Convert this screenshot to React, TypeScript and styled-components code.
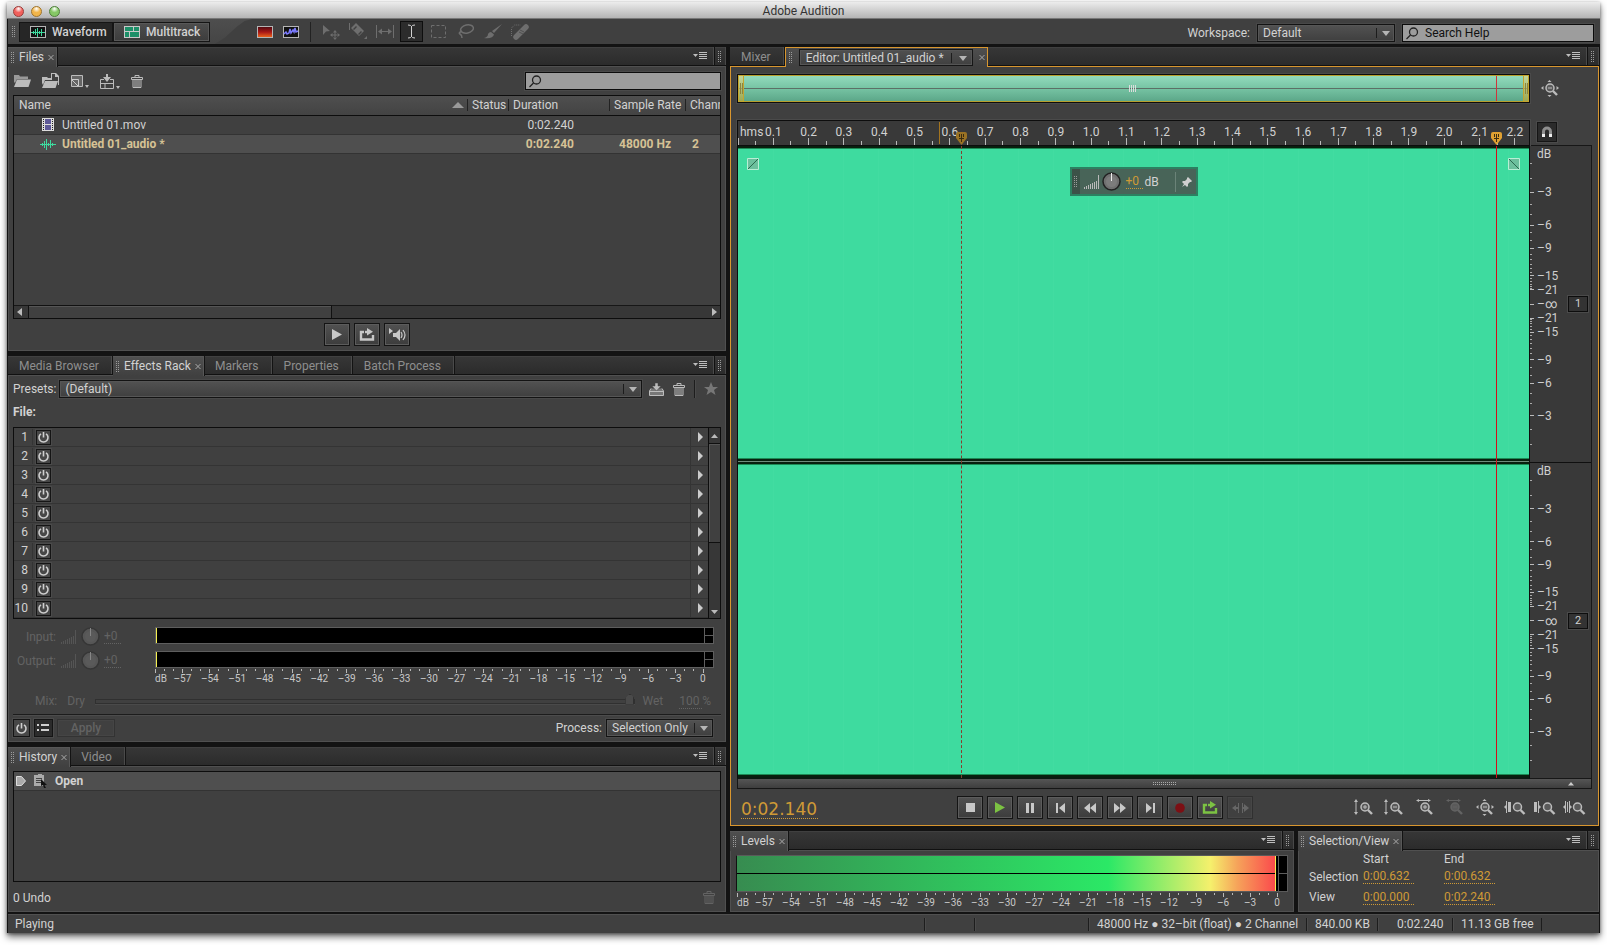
import React from 'react';
import styled, { createGlobalStyle, css } from 'styled-components';

const sans = '"Roboto", "Open Sans", "Liberation Sans", sans-serif';
const ink = '#d2d2d2';
const dim = '#8e8e8e';
const off = '#636363';
const gold = '#cf9a36';
const surface = '#404040';
const gutter = '#131313';
const edge = '#505050';
const focus = '#d8962f';
const wave = '#3edb9f';

const GlobalStyle = createGlobalStyle`
  * { box-sizing: border-box; }
  body { margin: 0; background: #fff; color: ${ink}; font: 12px/16px ${sans}; }
  button, input, select { font: inherit; color: inherit; margin: 0; padding: 0; border: 0; border-radius: 0; background: none; outline: none; }
  button, select { cursor: default; }
  svg { display: block; flex: none; }
`;

const Page = styled.div`
  min-height: 100vh;
  padding: 2px 7px 12px;
  display: flex;
  flex-direction: column;
`;
const Window = styled.div`
  flex: 1;
  display: flex;
  flex-direction: column;
  background: ${gutter};
  box-shadow: 0 4px 7px rgba(0, 0, 0, 0.55), 0 1px 3px rgba(0, 0, 0, 0.4);
`;
const TitleBar = styled.header`
  height: 17px;
  display: grid;
  grid-template-columns: 1fr auto 1fr;
  align-items: center;
  padding: 2px 6px 0;
  background: linear-gradient(#ececec, #b4b4b4);
  border-bottom: 1px solid #777;
  color: #333;
`;
const Title = styled.h1`
  margin: 0;
  font-size: 12px;
  line-height: 14px;
  font-weight: 400;
`;
const Lights = styled.div`
  display: flex;
  gap: 7px;
`;
const Light = styled.button<{ $c: string; $d: string }>`
  width: 11px;
  height: 11px;
  border-radius: 50%;
  border: 1px solid ${(p) => p.$d};
  background: radial-gradient(circle at 50% 20%, #fff 0, ${(p) => p.$c} 45%, ${(p) => p.$c} 100%);
`;

const AppBar = styled.div`
  height: 25px;
  margin: 0 0 3px 1px;
  display: flex;
  align-items: center;
  background: ${surface};
`;
const Modes = styled.div`
  display: flex;
  align-items: center;
  height: 25px;
  padding: 0 47px 0 4px;
  background: linear-gradient(#4e4e4e, #454545);
  clip-path: polygon(0 0, 98% 0, 95% 8%, 92% 30%, 87% 75%, 83% 100%, 0 100%);
`;
const ModeGroup = styled.div`
  display: flex;
  margin-left: 3px;
`;
const ModeButton = styled.button<{ $on?: boolean; $w: number }>`
  display: flex;
  align-items: center;
  gap: 6px;
  width: ${(p) => p.$w}px;
  height: 20px;
  padding-left: 10px;
  font-weight: 500;
  border: 1px solid #151515;
  background: ${(p) => (p.$on ? '#262626' : 'linear-gradient(#4e4e4e, #3c3c3c)')};
  ${(p) => !p.$on && 'box-shadow: inset 0 0 0 1px #585858;'}
`;
const ViewTools = styled.div`
  display: flex;
  gap: 10px;
  padding-right: 11px;
  margin-right: 8px;
  border-right: 1px solid #222;
  height: 20px;
  align-items: center;
`;
const Tools = styled.div`
  display: flex;
  gap: 4px;
  flex: 1;
`;
const Tool = styled.button<{ $on?: boolean }>`
  width: 23px;
  height: 21px;
  display: grid;
  place-items: center;
  border: 1px solid ${(p) => (p.$on ? '#0e0e0e' : 'transparent')};
  background: ${(p) => (p.$on ? '#2c2c2c' : 'none')};
  color: ${(p) => (p.$on ? ink : '#6e6e6e')};
`;
const Finder = styled.div`
  display: flex;
  align-items: center;
  gap: 7px;
  padding: 3px 6px 0 0;
`;
const Label = styled.label`
  white-space: nowrap;
`;

const SelectBox = styled.span<{ $w?: number; $grow?: boolean }>`
  position: relative;
  display: flex;
  height: 18px;
  ${(p) => (p.$grow ? 'flex: 1;' : `width: ${p.$w}px;`)}
  box-shadow: 0 0 0 1px #484848;
  svg { position: absolute; right: 5px; top: 4px; pointer-events: none; }
`;
const Select = styled.select`
  appearance: none;
  width: 100%;
  padding: 0 20px 0 5px;
  border: 1px solid #131313;
  background: linear-gradient(#525252, #3f3f3f);
  box-shadow: inset 0 0 0 1px #565656;
`;
const SearchBox = styled.div<{ $w: number }>`
  display: flex;
  align-items: center;
  width: ${(p) => p.$w}px;
  height: 18px;
  border: 1px solid #0c0c0c;
  background: #9d9d9d;
  color: #111;
  padding-left: 2px;
  box-shadow: 0 0 0 1px #4a4a4a;
  input { flex: 1; min-width: 0; padding-left: 5px; }
  input::placeholder { color: #111; opacity: 1; }
`;

const Workspace = styled.main`
  flex: 1;
  display: grid;
  grid-template-columns: minmax(0, 718fr) minmax(0, 869fr);
  gap: 4px;
  padding: 0 1px;
`;
const Column = styled.div`
  display: flex;
  flex-direction: column;
  gap: 5px;
  min-width: 0;
`;
const BottomRow = styled.div`
  display: grid;
  grid-template-columns: minmax(0, 564fr) minmax(0, 301fr);
  gap: 4px;
`;
const Panel = styled.section<{ $grow?: boolean }>`
  display: flex;
  flex-direction: column;
  min-width: 0;
  ${(p) => p.$grow && 'flex: 1;'}
`;
const PanelBody = styled.div<{ $focus?: boolean }>`
  flex: 1;
  display: flex;
  flex-direction: column;
  background: ${surface};
  border: 1px solid ${(p) => (p.$focus ? focus : edge)};
  border-top: 0;
`;
const Bar = styled.div<{ $focus?: boolean }>`
  display: flex;
  height: 20px;
  background: linear-gradient(#373737, #2a2a2a);
  box-shadow: inset 0 -1px ${(p) => (p.$focus ? focus : edge)}, inset 0 -2px #111, inset 0 1px #404040;
`;
const TabBox = styled.div<{ $on?: boolean; $focus?: boolean }>`
  display: flex;
  align-items: center;
  white-space: nowrap;
  button { white-space: nowrap; }
  ${(p) =>
    p.$on
      ? css`
          padding: 0 2px 1px 3px;
          background: linear-gradient(#4f4f4f, ${surface});
          border: solid ${p.$focus ? focus : '#575757'};
          border-width: 1px 1px 0 ${p.$focus ? '1px' : '0'};
          gap: ${p.$focus ? 6 : 4}px;
          box-shadow: ${p.$focus ? 'none' : '1px 0 #131313'};
        `
      : css`
          height: 18px;
          padding: 2px 12px 0 11px;
          color: ${dim};
          border-right: 1px solid #4a4a4a;
          box-shadow: 1px 0 #131313;
          margin-right: 1px;
        `}
`;
const EditorPick = styled.span`
  display: flex;
  align-items: center;
  gap: 7px;
  height: 17px;
  margin: 1px 0 0;
  padding: 0 5px 0 6px;
  border: 1px solid #161616;
  background: linear-gradient(#505050, ${surface});
  box-shadow: inset 0 0 0 1px #555;
`;
const PickSplit = styled.span`
  width: 1px;
  height: 10px;
  background: #1d1d1d;
`;
const BarEnd = styled.div`
  margin-left: auto;
  display: flex;
  height: 18px;
`;
const MenuButton = styled.button`
  width: 21px;
  border-right: 1px solid #4a4a4a;
`;
const GripCell = styled.span`
  width: 12px;
  border-left: 1px solid #111;
  border-right: 1px solid #484848;
  display: grid;
  place-items: center;
`;
const IconButton = styled.button<{ $off?: boolean }>`
  display: grid;
  place-items: center;
  color: ${(p) => (p.$off ? off : '#bcbcbc')};
`;
const RaisedButton = styled.button<{ $c?: string; $off?: boolean }>`
  width: 26px;
  height: 23px;
  display: grid;
  place-items: center;
  border: 1px solid ${(p) => (p.$off ? '#303030' : '#141414')};
  background: ${(p) => (p.$off ? surface : 'linear-gradient(#515151, #3c3c3c)')};
  box-shadow: inset 0 0 0 1px ${(p) => (p.$off ? '#464646' : '#5c5c5c')};
  color: ${(p) => (p.$off ? '#666' : p.$c || '#c8c8c8')};
`;

const FilesTools = styled.div`
  display: flex;
  align-items: center;
  gap: 11px;
  height: 18px;
  margin: 5px 4px 5px 5px;
`;
const Spacer = styled.span`
  flex: 1;
`;
const Well = styled.div<{ $grow?: boolean; $h?: number }>`
  display: flex;
  flex-direction: column;
  margin: 0 4px;
  border: 1px solid #0d0d0d;
  overflow: hidden;
  ${(p) => p.$grow && 'flex: 1;'}
  ${(p) => p.$h && `min-height: ${p.$h}px;`}
`;
const HistoryWell = styled(Well)`
  margin-top: 4px;
`;
const FileTable = styled.table`
  width: 100%;
  table-layout: fixed;
  border-collapse: collapse;
  white-space: nowrap;
  text-align: left;
  th {
    height: 19px;
    padding: 0 0 0 5px;
    font-weight: 400;
    background: linear-gradient(#4f4f4f, #434343);
    border-bottom: 1px solid #0d0d0d;
    overflow: hidden;
  }
  td { height: 19px; padding: 0; border-bottom: 1px solid #333; }
`;
const ThInner = styled.div<{ $first?: boolean }>`
  display: flex;
  align-items: center;
  justify-content: space-between;
  height: 12px;
  padding-left: 4px;
  margin-left: -5px;
  border-left: 1px solid ${(p) => (p.$first ? 'transparent' : '#222')};
`;
const FileRow = styled.tr<{ $on?: boolean }>`
  ${(p) => p.$on && 'background: #4f4f4f; color: #d6c295; font-weight: 700;'}
`;
const FileName = styled.span`
  display: grid;
  grid-template-columns: 16px auto;
  justify-content: start;
  align-items: center;
  justify-items: center;
  gap: 6px;
  padding-left: 26px;
`;
const Cell = styled.td<{ $right?: number; $left?: number }>`
  ${(p) => p.$right !== undefined && `&& { text-align: right; padding-right: ${p.$right}px; }`}
  ${(p) => p.$left !== undefined && `&& { padding-left: ${p.$left}px; }`}
`;
const HScroll = styled.div`
  display: grid;
  grid-template-columns: 15px 300fr 376fr 11px;
  align-items: center;
  height: 13px;
  margin-top: auto;
  background: #373737;
  border-top: 1px solid #171717;
  color: #bbb;
`;
const HThumb = styled.span`
  height: 12px;
  background: ${surface};
  border: 1px solid #555;
  border-width: 1px 0 0;
  outline: 1px solid #111;
`;
const Centered = styled.div`
  display: flex;
  justify-content: center;
  gap: 4px;
  padding: 4px 0;
`;

const RackBody = styled.div`
  display: flex;
  flex-direction: column;
  padding: 4px;
`;
const Row = styled.div<{ $gap?: number }>`
  display: flex;
  align-items: center;
  height: 18px;
  gap: ${(p) => p.$gap ?? 3}px;
`;
const PresetTools = styled(Row)`
  padding: 0 3px 0 4px;
`;
const VRule = styled.span`
  width: 1px;
  height: 18px;
  background: #1d1d1d;
  box-shadow: 1px 0 #4a4a4a;
`;
const FileHead = styled.h2`
  margin: 6px 0 7px;
  font-size: 12px;
  line-height: 16px;
  font-weight: 700;
`;
const Rack = styled.div`
  display: flex;
  border: 1px solid #0d0d0d;
`;
const RackList = styled.ol`
  flex: 1;
  margin: 0;
  padding: 0;
  list-style: none;
`;
const RackRow = styled.li`
  display: grid;
  grid-template-columns: 19px 18px 1fr 18px;
  align-items: center;
  height: 19px;
  border-bottom: 1px solid #343434;
`;
const RackNo = styled.span`
  text-align: right;
  padding-right: 4px;
  border-right: 1px solid #343434;
  margin-left: -4px;
`;
const SmallButton = styled.button<{ $w?: number; $h?: number; $pressed?: boolean }>`
  width: ${(p) => p.$w ?? 15}px;
  height: ${(p) => p.$h ?? 15}px;
  display: grid;
  place-items: center;
  border: 1px solid #151515;
  background: ${(p) => (p.$pressed ? '#2b2b2b' : '#474747')};
  box-shadow: 0 0 0 1px #4a4a4a;
  color: #cfcfcf;
`;
const RackPower = styled(SmallButton)`
  justify-self: end;
`;
const RackArrow = styled.button`
  grid-column: 4;
  height: 18px;
  border-left: 1px solid #343434;
  color: #ccc;
  padding-left: 6px;
`;
const VScroll = styled.div`
  display: grid;
  grid-template-rows: 15px 100fr 63fr 12px;
  justify-items: center;
  align-items: center;
  width: 12px;
  border-left: 1px solid #0d0d0d;
  background: #373737;
  color: #bbb;
`;
const VThumb = styled.span`
  width: 11px;
  height: 100%;
  background: ${surface};
  border: 1px solid #0f0f0f;
  border-width: 1px 0;
  box-shadow: inset 1px 1px #555;
`;
const GainGrid = styled.div`
  display: grid;
  grid-template-columns: 142px 1fr;
  row-gap: 7px;
  margin: 8px 7px 0 0;
`;
const GainControl = styled.div`
  display: grid;
  grid-template-columns: 43px 15px 18px auto;
  column-gap: 5px;
  align-items: center;
  justify-content: start;
  height: 13px;
  color: ${off};
  label { text-align: right; }
`;
const Hot = styled.input<{ $w: number; $off?: boolean }>`
  width: ${(p) => p.$w}px;
  height: 15px;
  line-height: 14px;
  color: ${(p) => (p.$off ? off : gold)};
  border-bottom: 1px dotted ${(p) => (p.$off ? off : gold)};
`;
const Meter = styled.div`
  display: grid;
  grid-template-columns: 1fr 9px;
  background: #000;
  border: 1px solid #5e5e5e;
  height: 17px;
`;
const MeterFloor = styled.span`
  border-left: 1px solid #f4ee50;
`;
const MeterClip = styled.span`
  border-left: 1px solid #5e5e5e;
  background: linear-gradient(#5e5e5e, #5e5e5e) 0 50% / 100% 1px no-repeat;
`;
const MeterScale = styled.div<{ $l: number; $r: number }>`
  margin: 1px ${(p) => p.$r}px 0 ${(p) => p.$l}px;
  color: #c8c8c8;
`;
const ScaleLabels = styled.div<{ $size?: number }>`
  display: flex;
  justify-content: space-between;
  height: 12px;
  line-height: 12px;
  font-size: ${(p) => p.$size ?? 10}px;
`;
const Slot = styled.span<{ $start?: boolean }>`
  width: 0;
  display: flex;
  justify-content: ${(p) => (p.$start ? 'flex-start' : 'center')};
  white-space: nowrap;
`;
const MixRow = styled.div`
  display: flex;
  align-items: center;
  gap: 10px;
  margin: 7px 10px 0 22px;
  height: 18px;
  color: ${off};
`;
const MixSlider = styled.input`
  appearance: none;
  flex: 1;
  height: 5px;
  border: 1px solid #303030;
  box-shadow: 0 1px #4a4a4a;
  margin-right: -3px;
  &::-webkit-slider-thumb {
    appearance: none;
    width: 9px;
    height: 11px;
    margin-top: -4px;
    border: 1px solid #303030;
    background: #4a4a4a;
    clip-path: polygon(50% 0, 100% 40%, 100% 100%, 0 100%, 0 40%);
  }
`;
const MixAmount = styled.span`
  display: flex;
  align-items: center;
  padding-left: 6px;
`;
const RackFoot = styled.div`
  display: flex;
  align-items: center;
  gap: 4px;
  margin-top: 4px;
  padding: 4px 8px 0 0;
  border-top: 1px solid #1c1c1c;
  box-shadow: inset 0 1px #4c4c4c;
`;
const Apply = styled.button`
  width: 58px;
  height: 18px;
  border: 1px solid #333;
  box-shadow: inset 0 0 0 1px #454545;
  color: ${off};
  font-weight: 500;
`;
const HistoryItem = styled.div`
  display: flex;
  align-items: center;
  gap: 8px;
  height: 19px;
  padding-left: 2px;
  background: #4f4f4f;
  border-bottom: 1px solid #333;
  font-weight: 700;
`;
const HistoryFoot = styled.div`
  display: flex;
  justify-content: space-between;
  align-items: center;
  height: 29px;
  padding: 2px 10px 0 4px;
`;

const EditorGrid = styled.div`
  flex: 1;
  display: grid;
  grid-template-columns: minmax(0, 1fr) 62px;
  grid-template-rows: 29px 17px 25px minmax(400px, 1fr) 10px;
  padding: 7px 6px 0;
`;
const Overview = styled.div`
  display: grid;
  grid-template-columns: 6px 1fr 6px;
  align-items: center;
  justify-items: center;
  position: relative;
  border: 1px solid #0d0d0d;
  box-shadow: inset 0 0 0 1px #b79f2c;
  background:
    linear-gradient(#5c6f66, #5c6f66) 0 50% / 100% 1px no-repeat,
    linear-gradient(#95dcbf, #76c3a3 50%, #5aa587);
  outline: 1px solid #4a4a4a;
`;
const OverviewHandle = styled.span`
  align-self: stretch;
  display: grid;
  place-items: center;
  width: 6px;
  border: 1px solid #c5a52c;
  background: linear-gradient(rgba(226, 210, 130, 0.6), rgba(200, 170, 50, 0.6));
`;
const OverviewHead = styled.span`
  position: absolute;
  left: 95.8%;
  top: 1px;
  bottom: 1px;
  width: 1px;
  background: #d0343c;
`;
const Side = styled.div`
  display: grid;
  place-items: center;
  padding-right: 24px;
`;
const Ruler = styled.div`
  grid-row: 3;
  position: relative;
  display: flex;
  flex-direction: column;
  justify-content: flex-end;
  border: 1px solid #0d0d0d;
  border-bottom: 0;
  background: #393939;
  outline: 1px solid #4a4a4a;
`;
const RulerLabels = styled(ScaleLabels)`
  margin-right: 1.78%;
`;
const Hms = styled.span`
  padding-left: 2px;
`;
const Marker = styled.svg<{ $left: number }>`
  position: absolute;
  bottom: 0;
  left: ${(p) => p.$left}%;
  margin-left: -5px;
`;
const LoopLine = styled.span`
  position: absolute;
  left: 25.4%;
  top: 1px;
  bottom: 1px;
  width: 1px;
  background: #a3741f;
`;
const RulerSide = styled.div`
  grid-row: 3;
  padding: 2px 0 0 7px;
`;
const WaveCanvas = styled.div`
  grid-row: 4;
  position: relative;
  display: grid;
  grid-template-rows: minmax(0, 1fr) minmax(0, 1fr);
  row-gap: 1px;
  background: #6f8c7c;
  border: 1px solid #0d0d0d;
  border-bottom: 2px solid #0b1a12;
`;
const Channel = styled.div`
  background: ${wave};
  border: 2px solid #08200f;
  border-width: 2px 0;
  box-shadow: inset 0 1px #1c8a55, inset 0 -1px #1c8a55;
  background-image: linear-gradient(90deg, rgba(255, 255, 255, 0.02) 1px, transparent 1px);
  background-size: 35px 100%;
`;
const Playhead = styled.span<{ $left: number; $ghost?: boolean }>`
  position: absolute;
  top: 0;
  bottom: -1px;
  left: ${(p) => p.$left}%;
  border-left: 1px ${(p) => (p.$ghost ? 'dashed #84402f' : 'solid #d60c1a')};
`;
const Fade = styled.svg<{ $right?: boolean }>`
  position: absolute;
  top: 12px;
  ${(p) => (p.$right ? 'right: 9px;' : 'left: 9px;')}
`;
const Hud = styled.div`
  position: absolute;
  top: 21px;
  left: 50%;
  transform: translateX(-50%);
  display: flex;
  align-items: center;
  gap: 2px;
  width: 128px;
  height: 29px;
  padding: 0 3px 0 2px;
  border: 2px solid #2c8061;
  background: linear-gradient(90deg, #3c5248 8px, #486458 8px);
`;
const HudTools = styled.span`
  display: flex;
  align-items: center;
  gap: 3px;
  padding: 0 3px 0 4px;
  color: #b9b9b9;
`;
const HudPin = styled.button`
  display: grid;
  place-items: center;
  height: 20px;
  padding-left: 5px;
  border-left: 1px solid #6b8378;
`;
const Scale = styled.div`
  grid-row: 4;
  display: grid;
  grid-template-rows: minmax(0, 1fr) minmax(0, 1fr);
  border: 1px solid #171717;
  border-left: 0;
  background: #393939;
`;
const ScaleHalf = styled.div`
  display: grid;
  grid-template-columns: 1fr 23px;
  align-items: center;
  & + & { border-top: 1px solid #0f0f0f; }
  svg { height: 100%; width: 37px; }
  text { font-size: 12px; fill: #cfcfcf; }
`;
const ChannelButton = styled.button`
  width: 20px;
  height: 16px;
  line-height: 14px;
  font-size: 11px;
  border: 1px solid #0d0d0d;
  background: #333;
  box-shadow: 0 0 0 1px #4a4a4a;
`;
const Scroller = styled.div`
  grid-row: 5;
  grid-column: 1 / 3;
  display: flex;
  justify-content: center;
  align-items: center;
  position: relative;
  border: 1px solid #161616;
  border-top: 0;
  background: linear-gradient(#555, #3e3e3e);
  color: #bbb;
  svg:last-child { position: absolute; right: 17px; top: 3px; }
`;
const Transport = styled.div`
  display: flex;
  align-items: center;
  justify-content: space-between;
  padding: 7px 14px 6px 10px;
`;
const Clock = styled.input`
  width: 77px;
  height: 20px;
  margin-top: 3px;
  font: 17px/19px "DejaVu Sans", sans-serif;
  color: ${gold};
  border-bottom: 1px dotted ${gold};
`;
const Group = styled.div<{ $gap: number }>`
  display: flex;
  align-items: center;
  gap: ${(p) => p.$gap}px;
`;
const TransportGroup = styled(Group)`
  margin-left: 37px;
`;
const LevelBody = styled.div`
  padding: 4px 5px 2px;
`;
const LevelMeter = styled.div`
  display: grid;
  grid-template-columns: 1fr 2px 9px;
  height: 37px;
  border: 1px solid #5a5a5a;
  border-left-color: #111;
  background: #000;
`;
const LevelFill = styled.div`
  border-right: 1px solid #f7e94e;
  background:
    linear-gradient(#000, #000) 0 50% / 100% 1px no-repeat,
    linear-gradient(90deg, #378c50, #2be866 69%, #f5f06c 88%, #f6a35a 93%, #fb4a4c);
`;
const ViewGrid = styled.div`
  display: grid;
  grid-template-columns: 54px 81px auto;
  grid-template-rows: 16px 19px 22px;
  justify-content: start;
  align-items: center;
  padding: 0 10px 3px;
`;
const StatusBar = styled.footer`
  display: flex;
  align-items: center;
  height: 19px;
  margin: 2px 1px 0;
  padding: 0 57px 0 7px;
  background: ${surface};
  border-top: 1px solid ${edge};
`;
const StatusCell = styled.span<{ $w: number; $pad?: number }>`
  display: flex;
  align-items: center;
  height: 13px;
  width: ${(p) => p.$w}px;
  padding-left: ${(p) => p.$pad ?? 8}px;
  border-left: 1px solid #1d1d1d;
  box-shadow: inset 1px 0 #4a4a4a;
  white-space: nowrap;
  &:last-child { border-right: 1px solid #1d1d1d; }
`;

const Grip = () => (
  <svg width="4" height="11" fill="#9b9b9b">
    {[0, 2, 4, 6, 8, 10].map((y) => (
      <g key={y}><rect y={y} width="1" height="1" /><rect x="2" y={y} width="1" height="1" /></g>
    ))}
  </svg>
);
const Cross = () => (
  <svg width="6" height="7" stroke="#a8a8a8" fill="none"><path d="M.5 1l5 5M5.500 1l-5 5" /></svg>
);
const Down = () => (
  <svg width="8" height="10"><path d="M0 3h8l-4 5z" fill="#b5b5b5" /></svg>
);
const PickArrow = () => (
  <svg width="14" height="10"><path d="M0 0h1v10h-1z" fill="#1c1c1c" /><path d="M6 3h8l-4 5z" fill="#b5b5b5" /></svg>
);
const MenuIcon = () => (
  <svg width="15" height="9" fill="#bdbdbd">
    <path d="M0 2h5L2.500 5z" /><path d="M6 0h8v1H6zM6 2h8v1H6zM6 4h8v1H6zM6 6h8v1H6z" />
  </svg>
);
const Lens = () => (
  <svg width="15" height="15" fill="none" stroke="#222" strokeWidth="1.3">
    <circle cx="8.5" cy="6" r="4" /><path d="M5.5 9L1.5 13" />
  </svg>
);
const Trash = () => (
  <svg width="12" height="13" fill="none" stroke="currentColor">
    <path d="M.5 2.500h11v2H.5zM4 2V.5h4V2M2 5v7.500h8V5M4 5v7M6 5v7M8 5v7" />
  </svg>
);
const Power = () => (
  <svg width="13" height="13" fill="none" stroke="currentColor" strokeWidth="1.6">
    <path d="M4 2.800a4.500 4.500 0 1 0 5 0M6.500 1v5.500" />
  </svg>
);
const Play = () => (
  <svg width="12" height="13" fill="currentColor"><path d="M1 1l10 5.500L1 12z" /></svg>
);
const Loop = () => (
  <svg width="16" height="14" fill="none" stroke="currentColor" strokeWidth="2.4">
    <path d="M5 4H2v7.500h12V7" /><path d="M6 4h3" /><path d="M8 0l6 3.800-6 3.700z" fill="currentColor" stroke="none" />
  </svg>
);
const WaveIcon = () => (
  <svg width="16" height="12" stroke="#3edb9f"><path d="M0 6.500h16" /><path d="M2.500 5v3M4.500 3v7M6.500 1v11M8.500 5v3M10.500 2v8M12.500 5v3" /></svg>
);
const Triangle = ({ d }: { d: string }) => (
  <svg width="9" height="9" fill="currentColor"><path d={d} /></svg>
);
const VolBars = ({ faint }: { faint?: boolean }) => (
  <svg width="15" height="14" fill={faint ? '#555' : 'currentColor'}>
    {[0, 1, 2, 3, 4, 5, 6, 7].map((i) => (
      <rect key={i} x={i * 2} y={i === 7 ? 0 : 12 - i} width="1" height={i === 7 ? 14 : 2 + i} />
    ))}
  </svg>
);
const Knob = ({ lit }: { lit?: boolean }) => (
  <svg width="19" height="19">
    <circle cx="9.500" cy="9.500" r="8.500" fill={lit ? '#707070' : '#565656'} stroke={lit ? '#222' : '#363636'} strokeWidth="1.500" />
    <circle cx="9.500" cy="9.500" r="5.500" fill={lit ? '#7c7c7c' : '#5a5a5a'} />
    <path d="M9.500 1v8" stroke={lit ? '#eee' : '#868686'} />
  </svg>
);
const Frame = ({ children }: { children: React.ReactNode }) => (
  <svg width="16" height="12"><rect x=".5" y=".5" width="15" height="11" fill="#111" stroke="#b5b5b5" />{children}</svg>
);
const MultitrackIcon = () => (
  <svg width="16" height="12"><path d="M0 0h16v12H0z" fill="#c9c9c9" /><path d="M1 1h8v4H1zM10 1h5v4h-5zM1 6h4v5H1zM6 6h9v5H6z" fill="#1d8f68" /></svg>
);

const toolIcons = [
  <svg width="18" height="16" fill="currentColor" key="move"><path d="M1 1l7 6-4 .500L1 11z" /><path d="M13 6l2 2.500h-4zM13 16l2-2.500h-4zM8 11l2.500-2v4zM18 11l-2.500-2v4zM12.500 8h1v6h-1zM10 10.500h6v1h-6z" /></svg>,
  <svg width="18" height="17" fill="currentColor" key="razor"><path d="M0 0h1v7H0zM2 5l5-5 8 8-5 5z" /><path d="M4 6l3-3 1 1-3 3zM9 11l3-3 1 1-3 3z" fill="#404040" /><path d="M15 16l3-3v3z" /></svg>,
  <svg width="18" height="13" fill="none" stroke="currentColor" key="slip"><path d="M.5 0v13M17.500 0v13M4 6.500h10" /><path d="M2 6.500l4-3v6zM16 6.500l-4-3v6z" fill="currentColor" stroke="none" /></svg>,
  <svg width="9" height="15" fill="none" stroke="currentColor" key="time"><path d="M1 1q3 0 3.500 1.500Q5 1 8 1M4.500 2v11M1 14q3 0 3.500-1.500Q5 14 8 14" /></svg>,
  <svg width="15" height="13" fill="none" stroke="currentColor" strokeDasharray="3 2" key="marquee"><path d="M.5.5h14v12H.5z" /></svg>,
  <svg width="17" height="15" fill="none" stroke="currentColor" strokeWidth="1.500" key="lasso"><ellipse cx="10" cy="5" rx="6.500" ry="4" transform="rotate(-12 10 5)" /><path d="M5 7q-4 2-2 3t2 4" /></svg>,
  <svg width="18" height="15" fill="currentColor" key="brush"><path d="M18 0L10 9 8 7zM7 8l3 2.500Q9 15 0 14q4-1 4-4 1-2 3-2z" /></svg>,
  <svg width="20" height="16" fill="none" stroke="currentColor" key="heal"><path d="M6 13L16 3" strokeWidth="5.500" strokeLinecap="round" /><path d="M1.500 12V4l3-3h6" strokeDasharray="1 1" /><path d="M9 8l4 2M10 6l4 2" stroke="#505050" /></svg>,
];
const toolNames = ['Move', 'Razor', 'Slip', 'Time Selection', 'Marquee Selection', 'Lasso', 'Paintbrush', 'Spot Healing'];

const ZoomGlass = ({ mark, pre }: { mark?: 'in' | 'out'; pre: string }) => (
  <svg width="19" height="17" fill="none" stroke="currentColor" viewBox="0 0 19 17" overflow="visible">
    <circle cx={mark ? 10 : 12.5} cy="8" r="4" fill="#5a5a5a" strokeWidth="1.500" />
    <path d={mark ? 'M13 11l4 4' : 'M15.500 11l4 4'} strokeWidth="2.400" />
    {mark && <path d={mark === 'in' ? 'M8 8h4M10 6v4' : 'M8 8h4'} />}
    <path d={pre} fill="currentColor" stroke="none" />
  </svg>
);
const vArrow = 'M1 0l2 3H1.500v10H3l-2 3-2-3H.5V3H-1z';
const hArrow = 'M1 1.500l3-1.500v1h9V0l3 1.500L13 3V2H4v1z';
const quad = 'M9.500 0l2 2h-4zM9.500 17l2-2h-4zM1 8l2.500-2v4zM19 8l-2.500-2v4z';
const zooms: [string, 'in' | 'out' | undefined, string][] = [
  ['Zoom In Amplitude', 'in', vArrow],
  ['Zoom Out Amplitude', 'out', vArrow],
  ['Zoom In Time', 'in', hArrow],
  ['Zoom Out Time', 'out', hArrow],
  ['Zoom Out Full', 'out', quad],
  ['Zoom In at In Point', undefined, 'M-1 8l2-2V2h1v12H1v-4zM3 3h3v10H3z'],
  ['Zoom In at Out Point', undefined, 'M-1 3h3v10h-3zM3 2h1v4l2 2-2 2v4H3z'],
  ['Zoom to Selection', undefined, 'M-2 8l2-2V2h1v12H0v-4zM2 3h1v10H2zM4 2h1v4l2 2-2 2v4H4z'],
];

const Ticks = ({ marks, h, minor }: { marks: { at: number; major: boolean }[]; h: number; minor: number }) => (
  <svg width="100%" height={h} overflow="visible" shapeRendering="crispEdges" stroke="#b8b8b8">
    {marks.map((m, i) => (
      <line key={i} x1={`${m.at}%`} x2={`${m.at}%`} y1={minor < 0 && !m.major ? -minor : 0} y2={minor < 0 || m.major ? h : minor} />
    ))}
  </svg>
);
const dbMarks = Array.from({ length: 61 }, (_, i) => ({ at: (i / 60) * 100, major: i % 3 === 0 }));
const dbLabels = ['dB', ...Array.from({ length: 19 }, (_, i) => `–${57 - i * 3}`), '0'];
const timeMarks = Array.from({ length: 45 }, (_, i) => ({ at: (i / 44.8) * 100, major: i % 2 === 0 }));
const timeLabels = ['hms', ...Array.from({ length: 22 }, (_, i) => ((i + 1) / 10).toFixed(1))];

const DbScale = ({ l, r }: { l: number; r: number }) => (
  <MeterScale $l={l} $r={r}>
    <Ticks marks={dbMarks} h={4} minor={2} />
    <ScaleLabels>{dbLabels.map((t, i) => <Slot key={t} $start={i === 0}>{t}</Slot>)}</ScaleLabels>
  </MeterScale>
);

const amp: [string, number][] = [['–3', 29.2], ['–6', 50], ['–9', 64.6], ['–15', 82.2], ['–21', 91.1]];
const ampMarks = [11, 20.5, 37, 43.5, 55, 60, 68.4, 71.8, 74.9, 77.6, 80, 84.1, 85.9, 87.4, 88.7, 90];
const AmpScale = ({ n }: { n: number }) => (
  <ScaleHalf>
    <svg shapeRendering="crispEdges">
      <text x="7" y="12">dB</text>
      {amp.flatMap(([t, p]) => [p / 2, 100 - p / 2].map((y) => (
        <g key={t + y}>
          <line x1="0" x2="4" y1={`${y}%`} y2={`${y}%`} stroke="#bbb" />
          <text x="7" y={`${y}%`} dy="4">{t}</text>
        </g>
      )))}
      <line x1="0" x2="4" y1="50%" y2="50%" stroke="#bbb" />
      <text x="7" y="50%" dy="4">–∞</text>
      {ampMarks.flatMap((p) => [p / 2, 100 - p / 2].map((y) => (
        <line key={y} x1="0" x2="2" y1={`${y}%`} y2={`${y}%`} stroke="#aaa" />
      )))}
    </svg>
    <ChannelButton>{n}</ChannelButton>
  </ScaleHalf>
);

const Tab = ({ children, on }: { children: string; on?: boolean }) => (
  <TabBox $on={on}>
    {on && <Grip />}
    <button role="tab" aria-selected={!!on}>{children}</button>
    {on && <button aria-label={`Close ${children}`}><Cross /></button>}
  </TabBox>
);
const PanelEnd = () => (
  <BarEnd>
    <MenuButton aria-label="Panel menu"><MenuIcon /></MenuButton>
    <GripCell><Grip /></GripCell>
  </BarEnd>
);

function FilesPanel() {
  return (
    <Panel $grow>
      <Bar role="tablist"><Tab on>Files</Tab><PanelEnd /></Bar>
      <PanelBody>
        <FilesTools>
          <IconButton aria-label="Open File">
            <svg width="17" height="14" fill="currentColor"><path d="M0 1h5l1 1.500h8V5H3L1 9 0 8z" fill="#999" /><path d="M3 5.500h14l-2.500 7.500H0z" /></svg>
          </IconButton>
          <IconButton aria-label="Import File">
            <svg width="18" height="16" fill="currentColor"><path d="M0 4h5l1 1h3V0h5l3 3v9h-1V4h-3V1h-3v6H3l-2 5-1-2z" /><path d="M3 8h13l-2.500 7H0z" /></svg>
          </IconButton>
          <IconButton aria-label="New File">
            <svg width="18" height="14" fill="none" stroke="currentColor"><path d="M.5 1.500h11v11H.5z" fill="#666" /><path d="M1 5.500h6.500V12M1 6l6 6" stroke="#ccc" /><path d="M14 11h4l-2 3z" fill="currentColor" stroke="none" /></svg>
          </IconButton>
          <IconButton aria-label="Insert into Multitrack">
            <svg width="20" height="15" fill="none" stroke="currentColor"><path d="M4 5.500H.5v9h13v-9H10M1 9.500h12M5 10v4" /><path d="M6 0h2v3h3L7 8 3 3h3z" fill="currentColor" stroke="none" /><path d="M16 12h4l-2 3z" fill="currentColor" stroke="none" /></svg>
          </IconButton>
          <IconButton aria-label="Delete"><Trash /></IconButton>
          <Spacer />
          <SearchBox $w={196}><Lens /><input aria-label="Search files" /></SearchBox>
        </FilesTools>
        <Well $grow>
          <FileTable>
            <colgroup><col /><col width="41" /><col width="101" /><col width="76" /><col width="35" /></colgroup>
            <thead>
              <tr>
                <th><ThInner $first>Name <svg width="16" height="8"><path d="M1 7h12L7 1z" fill="#999" /></svg></ThInner></th>
                <th><ThInner>Status</ThInner></th>
                <th><ThInner>Duration</ThInner></th>
                <th><ThInner>Sample Rate</ThInner></th>
                <th><ThInner>Channels</ThInner></th>
              </tr>
            </thead>
            <tbody>
              <FileRow>
                <td>
                  <FileName>
                    <svg width="12" height="13"><path d="M0 0h12v13H0z" fill="#ddd" /><path d="M3 1h6v5H3zM3 7h6v5H3z" fill="#5f5a99" /><path d="M1.500 1v12M10.500 1v12" stroke="#222" strokeDasharray="1 1" /></svg>
                    Untitled 01.mov
                  </FileName>
                </td>
                <td />
                <Cell $right={35}>0:02.240</Cell>
                <td />
                <td />
              </FileRow>
              <FileRow $on>
                <td><FileName><WaveIcon />Untitled 01_audio *</FileName></td>
                <td />
                <Cell $right={35}>0:02.240</Cell>
                <Cell $right={14}>48000 Hz</Cell>
                <Cell $left={7}>2</Cell>
              </FileRow>
            </tbody>
          </FileTable>
          <HScroll>
            <Triangle d="M8 0v8L3 4z" />
            <HThumb />
            <span />
            <Triangle d="M3 0v8l5-4z" />
          </HScroll>
        </Well>
        <Centered>
          <RaisedButton aria-label="Play"><Play /></RaisedButton>
          <RaisedButton aria-label="Loop"><Loop /></RaisedButton>
          <RaisedButton aria-label="Auto-play">
            <svg width="19" height="14" fill="currentColor"><path d="M1 0l4 3-4 3zM5 5h3l4-4v12L8 9H5z" /><path d="M13 4q2 3 0 6M15 2q4 5 0 10" fill="none" stroke="currentColor" strokeWidth="1.200" /></svg>
          </RaisedButton>
        </Centered>
      </PanelBody>
    </Panel>
  );
}

const Gain = ({ name }: { name: string }) => (
  <>
    <GainControl>
      <label htmlFor={`gain-${name}`}>{name}:</label>
      <VolBars faint />
      <Knob />
      <Hot id={`gain-${name}`} $w={17} $off defaultValue="+0" />
    </GainControl>
    <Meter><MeterFloor /><MeterClip /></Meter>
  </>
);

function EffectsPanel() {
  return (
    <Panel>
      <Bar role="tablist">
        <Tab>Media Browser</Tab><Tab on>Effects Rack</Tab><Tab>Markers</Tab><Tab>Properties</Tab><Tab>Batch Process</Tab>
        <PanelEnd />
      </Bar>
      <PanelBody>
        <RackBody>
          <Row>
            <Label htmlFor="presets">Presets:</Label>
            <SelectBox $grow><Select id="presets"><option>(Default)</option></Select><PickArrow /></SelectBox>
            <PresetTools $gap={9}>
              <IconButton aria-label="Save preset">
                <svg width="15" height="13" fill="none" stroke="currentColor"><path d="M2 5.500L.5 8v4.500h14V8L13 5.500M1 8.500h13" fill="#777" /><path d="M6 0h3v3h3L7.500 8 3 3h3z" fill="currentColor" stroke="#404040" strokeWidth=".5" /></svg>
              </IconButton>
              <IconButton aria-label="Delete preset"><Trash /></IconButton>
              <VRule />
              <IconButton aria-label="Favorite">
                <svg width="14" height="14" fill="#777"><path d="M7 0l2 5h5l-4 3 1.500 5L7 10l-4.500 3L4 8 0 5h5z" /></svg>
              </IconButton>
            </PresetTools>
          </Row>
          <FileHead>File:</FileHead>
          <Rack>
            <RackList>
              {Array.from({ length: 10 }, (_, i) => (
                <RackRow key={i}>
                  <RackNo>{i + 1}</RackNo>
                  <RackPower aria-label={`Toggle effect ${i + 1}`}><Power /></RackPower>
                  <RackArrow aria-label={`Choose effect ${i + 1}`}>
                    <svg width="8" height="10" fill="currentColor"><path d="M1 0l5 5-5 5z" /></svg>
                  </RackArrow>
                </RackRow>
              ))}
            </RackList>
            <VScroll>
              <Triangle d="M1 7h7L4.500 3z" />
              <VThumb />
              <span />
              <Triangle d="M1 2h7L4.500 6z" />
            </VScroll>
          </Rack>
          <GainGrid>
            <Gain name="Input" />
            <Gain name="Output" />
          </GainGrid>
          <DbScale l={142} r={18} />
          <MixRow>
            <label htmlFor="mix">Mix:</label>
            <span>Dry</span>
            <MixSlider id="mix" type="range" min="0" max="100" defaultValue="100" disabled />
            <span>Wet</span>
            <MixAmount><Hot aria-label="Mix amount" $w={23} $off defaultValue="100" />%</MixAmount>
          </MixRow>
          <RackFoot>
            <SmallButton $w={17} $h={18} aria-label="Rack power"><Power /></SmallButton>
            <SmallButton $w={19} $h={18} $pressed aria-label="Toggle list view">
              <svg width="13" height="10" fill="currentColor"><path d="M0 1h2v2H0zM0 6h2v2H0zM4 1h8v2H4zM4 6h8v2H4z" /></svg>
            </SmallButton>
            <Apply disabled>Apply</Apply>
            <Spacer />
            <Label htmlFor="process">Process:</Label>
            <SelectBox $w={107}><Select id="process"><option>Selection Only</option></Select><PickArrow /></SelectBox>
          </RackFoot>
        </RackBody>
      </PanelBody>
    </Panel>
  );
}

function HistoryPanel() {
  return (
    <Panel>
      <Bar role="tablist"><Tab on>History</Tab><Tab>Video</Tab><PanelEnd /></Bar>
      <PanelBody>
        <HistoryWell $h={111}>
          <HistoryItem>
            <svg width="10" height="10"><path d="M.5.5h5l4 4.500-4 4.500h-5z" fill="#aaa" stroke="#ddd" /></svg>
            <svg width="13" height="14"><path d="M0 1h4v-1h4v1h2v11H0z" fill="#aaa" /><path d="M2 4.500h6M2 6.500h6M2 8.500h6" stroke="#444" /><path d="M7 5l6 6H10.500l1.500 3-2 0-1-3-2 1z" fill="#111" /></svg>
            Open
          </HistoryItem>
        </HistoryWell>
        <HistoryFoot>0 Undo<IconButton $off aria-label="Delete history"><Trash /></IconButton></HistoryFoot>
      </PanelBody>
    </Panel>
  );
}

const Pin = ({ left, fill }: { left: number; fill: string }) => (
  <Marker $left={left} width="11" height="13">
    <path d="M0 2q0-2 2-2h7q2 0 2 2v4L5.500 13 0 6z" fill={fill} />
    <path d="M3.500 2v3M5.500 2v8M7.500 2v3M3 6.500h5" stroke="#3a2c10" />
  </Marker>
);

const G = '#7cc243';
const transport: [string, React.ReactNode, string?][] = [
  ['Stop', <svg width="9" height="9"><path d="M0 0h9v9H0z" fill="currentColor" /></svg>],
  ['Play', <Play />, G],
  ['Pause', <svg width="8" height="10"><path d="M0 0h3v10H0zM5 0h3v10H5z" fill="currentColor" /></svg>],
  ['Previous', <svg width="9" height="10"><path d="M0 0h2v10H0zM9 0v10L3 5z" fill="currentColor" /></svg>],
  ['Rewind', <svg width="12" height="10"><path d="M6 0v10L0 5zM12 0v10L6 5z" fill="currentColor" /></svg>],
  ['Fast Forward', <svg width="12" height="10"><path d="M0 0v10l6-5zM6 0v10l6-5z" fill="currentColor" /></svg>],
  ['Next', <svg width="9" height="10"><path d="M0 0v10l6-5zM7 0h2v10H7z" fill="currentColor" /></svg>],
  ['Record', <svg width="10" height="10"><circle cx="5" cy="5" r="4.800" fill="currentColor" /></svg>, '#7c0f14'],
  ['Loop Playback', <Loop />, G],
];

function EditorPanel() {
  return (
    <Panel $grow>
      <Bar $focus role="tablist">
        <Tab>Mixer</Tab>
        <TabBox $on $focus>
          <Grip />
          <EditorPick>
            <button role="tab" aria-selected>Editor: Untitled 01_audio *</button>
            <PickSplit />
            <button aria-label="Choose file"><Down /></button>
          </EditorPick>
          <button aria-label="Close editor"><Cross /></button>
        </TabBox>
        <PanelEnd />
      </Bar>
      <PanelBody $focus>
        <EditorGrid>
          <Overview>
            <OverviewHandle><svg width="3" height="11" stroke="#8a8440"><path d="M.5 0v11M2.500 0v11" /></svg></OverviewHandle>
            <svg width="9" height="7" stroke="#dcdcdc"><path d="M.5 0v7M2.500 0v7M4.500 0v7M6.500 0v7" /></svg>
            <OverviewHandle><svg width="3" height="11" stroke="#8a8440"><path d="M.5 0v11M2.500 0v11" /></svg></OverviewHandle>
            <OverviewHead />
          </Overview>
          <Side>
            <IconButton aria-label="Zoom Out Full"><ZoomGlass mark="out" pre={quad} /></IconButton>
          </Side>
          <Ruler>
            <RulerLabels $size={12}>{timeLabels.map((t, i) => <Slot key={t} $start={i === 0}>{i === 0 ? <Hms>{t}</Hms> : t}</Slot>)}</RulerLabels>
            <Ticks marks={timeMarks} h={7} minor={-3} />
            <LoopLine />
            <Pin left={28.2} fill="#9a7224" />
            <Pin left={95.8} fill="#e0a132" />
          </Ruler>
          <RulerSide>
            <SmallButton $w={20} $h={20} $pressed aria-label="Toggle snapping">
              <svg width="12" height="12" fill="none" stroke="#8f8f8f" strokeWidth="3"><path d="M2.500 8V5.500a3.500 3.500 0 0 1 7 0V8" /><path d="M2.500 8v3M9.500 8v3" stroke="#eee" /></svg>
            </SmallButton>
          </RulerSide>
          <WaveCanvas>
            <Channel />
            <Channel />
            <Fade width="12" height="12"><path d="M.5.5h11v11H.5z" fill="#6cc09d" stroke="#b9efd6" /><path d="M1 11L11 1" stroke="#2b6a50" /></Fade>
            <Fade $right width="12" height="12"><path d="M.5.5h11v11H.5z" fill="#6cc09d" stroke="#b9efd6" /><path d="M1 1l10 10" stroke="#2b6a50" /></Fade>
            <Playhead $left={28.2} $ghost />
            <Playhead $left={95.8} />
            <Hud>
              <Grip />
              <HudTools>
                <VolBars />
                <Knob lit />
              </HudTools>
              <Hot aria-label="Gain" $w={17} defaultValue="+0" />
              dB
              <Spacer />
              <HudPin aria-label="Pin">
                <svg width="12" height="12" fill="#cfcfcf"><path d="M7 1l4 4-1 1h-1L7 8v2L6 11 4 9l-3 2 2-3-2-2 1-1h2l2-2V2z" /></svg>
              </HudPin>
            </Hud>
          </WaveCanvas>
          <Scale><AmpScale n={1} /><AmpScale n={2} /></Scale>
          <Scroller>
            <svg width="24" height="3" fill="#aaa">
              {Array.from({ length: 12 }, (_, i) => <path key={i} d={`M${i * 2} 0h1v1h-1zM${i * 2} 2h1v1h-1z`} />)}
            </svg>
            <svg width="6" height="4" fill="#ccc"><path d="M0 3.500h6L3 0z" /></svg>
          </Scroller>
        </EditorGrid>
        <Transport>
          <Clock aria-label="Current time" defaultValue="0:02.140" />
          <TransportGroup $gap={4}>
            {transport.map(([name, icon, c]) => <RaisedButton key={name} aria-label={name} $c={c}>{icon}</RaisedButton>)}
            <RaisedButton $off aria-label="Skip Selection">
              <svg width="17" height="12" fill="currentColor"><path d="M0 6l4-3v2h2V1h1v10H6V7H4v2zM17 6l-5-4v3h-1V1h-1v10h1V7h1v3z" /></svg>
            </RaisedButton>
          </TransportGroup>
          <Group $gap={11}>
            {zooms.map(([name, mark, pre], i) => (
              <IconButton key={name} aria-label={name} $off={i === 3}><ZoomGlass mark={mark} pre={pre} /></IconButton>
            ))}
          </Group>
        </Transport>
      </PanelBody>
    </Panel>
  );
}

const rows: [string, string, string][] = [['Selection', '0:00.632', '0:00.632'], ['View', '0:00.000', '0:02.240']];

export default function App() {
  return (
    <>
      <GlobalStyle />
      <Page>
        <Window>
          <TitleBar>
            <Lights>
              <Light aria-label="Close window" $c="#f0605c" $d="#9b3a36" />
              <Light aria-label="Minimize window" $c="#f1b54a" $d="#a0742a" />
              <Light aria-label="Zoom window" $c="#85c765" $d="#4d7f39" />
            </Lights>
            <Title>Adobe Audition</Title>
          </TitleBar>
          <AppBar>
            <Modes>
              <Grip />
              <ModeGroup>
                <ModeButton $on $w={94}><Frame><path d="M1 6.500h14M3.500 5v3M5.500 3v6M7.500 2v9M9.500 5v3M11.500 3v7" stroke="#3edb9f" /></Frame>Waveform</ModeButton>
                <ModeButton $w={97}><MultitrackIcon />Multitrack</ModeButton>
              </ModeGroup>
            </Modes>
            <ViewTools>
              <IconButton aria-label="Spectral Frequency Display">
                <svg width="16" height="12">
                  <defs><linearGradient id="heat" x2="0" y2="1"><stop stopColor="#4a0a10" /><stop offset=".5" stopColor="#a81616" /><stop offset="1" stopColor="#f06a1c" /></linearGradient></defs>
                  <rect x=".5" y=".5" width="15" height="11" fill="url(#heat)" stroke="#b5b5b5" />
                </svg>
              </IconButton>
              <IconButton aria-label="Spectral Pitch Display">
                <Frame><path d="M1 8l2-2 1 2 2-1 1-4 1 4 2-3 1 2 1-4 1 4 2-1" fill="none" stroke="#7b7bff" strokeWidth="1.500" /></Frame>
              </IconButton>
            </ViewTools>
            <Tools>
              {toolIcons.map((icon, i) => <Tool key={toolNames[i]} aria-label={toolNames[i]} $on={i === 3}>{icon}</Tool>)}
            </Tools>
            <Finder>
              <Label htmlFor="workspace">Workspace:</Label>
              <SelectBox $w={138}><Select id="workspace"><option>Default</option></Select><PickArrow /></SelectBox>
              <SearchBox $w={192}><Lens /><input aria-label="Search Help" placeholder="Search Help" /></SearchBox>
            </Finder>
          </AppBar>
          <Workspace>
            <Column>
              <FilesPanel />
              <EffectsPanel />
              <HistoryPanel />
            </Column>
            <Column>
              <EditorPanel />
              <BottomRow>
                <Panel>
                  <Bar role="tablist"><Tab on>Levels</Tab><PanelEnd /></Bar>
                  <PanelBody>
                    <LevelBody>
                      <LevelMeter><LevelFill /><span /><MeterClip /></LevelMeter>
                      <DbScale l={1} r={11} />
                    </LevelBody>
                  </PanelBody>
                </Panel>
                <Panel>
                  <Bar role="tablist"><Tab on>Selection/View</Tab><PanelEnd /></Bar>
                  <PanelBody>
                    <ViewGrid>
                      <span />
                      <span>Start</span>
                      <span>End</span>
                      {rows.map(([n, a, b]) => (
                        <React.Fragment key={n}>
                          <label htmlFor={`start-${n}`}>{n}</label>
                          <Hot id={`start-${n}`} $w={51} defaultValue={a} />
                          <Hot aria-label={`${n} end`} $w={51} defaultValue={b} />
                        </React.Fragment>
                      ))}
                    </ViewGrid>
                  </PanelBody>
                </Panel>
              </BottomRow>
            </Column>
          </Workspace>
          <StatusBar>
            Playing
            <Spacer />
            <StatusCell $w={50} />
            <StatusCell $w={114} />
            <StatusCell $w={218}>48000 Hz ● 32–bit (float) ● 2 Channel</StatusCell>
            <StatusCell $w={71}>840.00 KB</StatusCell>
            <StatusCell $w={75} $pad={19}>0:02.240</StatusCell>
            <StatusCell $w={90}>11.13 GB free</StatusCell>
          </StatusBar>
        </Window>
      </Page>
    </>
  );
}
